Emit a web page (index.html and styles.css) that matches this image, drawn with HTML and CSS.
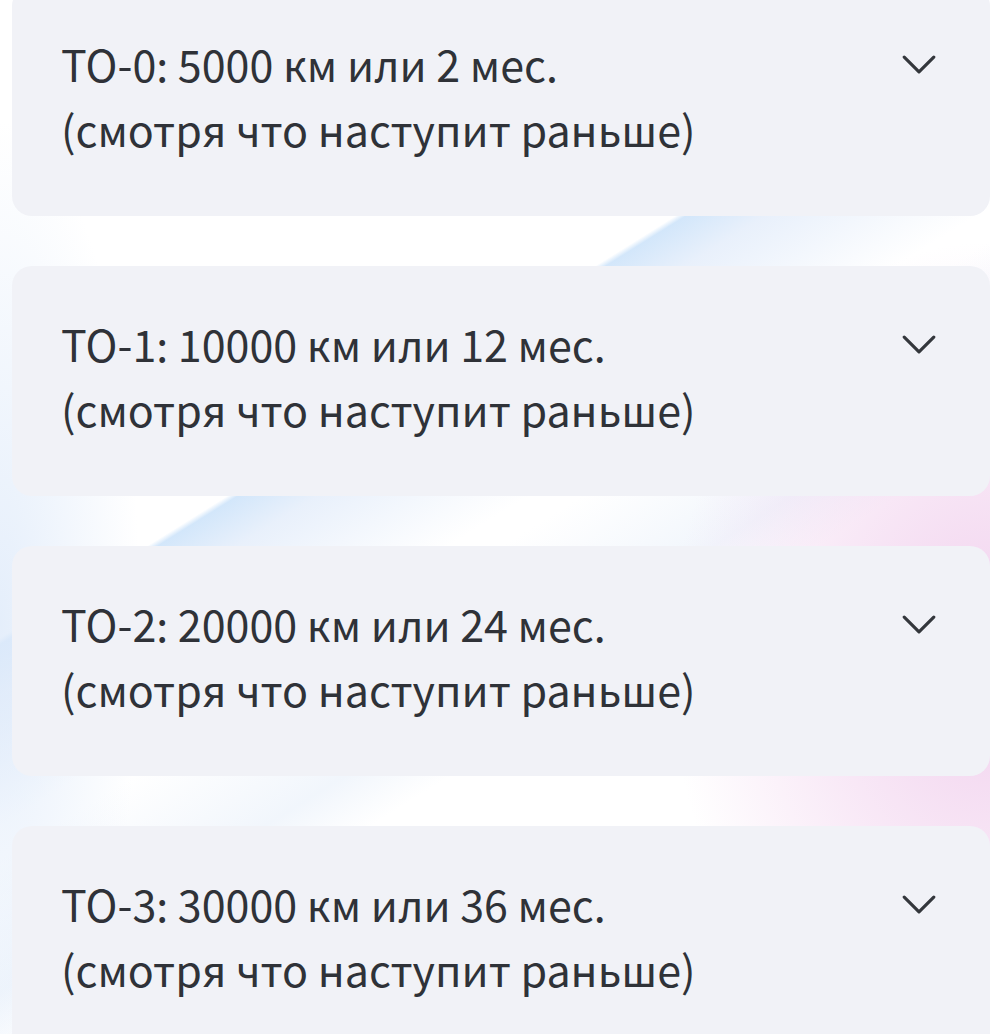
FILE: index.html
```html
<!DOCTYPE html>
<html lang="ru">
<head>
  <meta charset="UTF-8">
  <meta name="viewport" content="width=device-width, initial-scale=1.0">
  <title>Регламент ТО</title>
  <link rel="stylesheet" href="styles.css">
</head>
<body>
  <div class="service-list">
    <div class="service-item">
      <div class="service-text">
        <p>ТО-0: 5000 км или 2 мес.</p>
        <p>(смотря что наступит раньше)</p>
      </div>
      <svg class="chevron" viewBox="0 0 32 18"><polyline points="2,2 16,16 30,2"/></svg>
    </div>
    <div class="service-item">
      <div class="service-text">
        <p>ТО-1: 10000 км или 12 мес.</p>
        <p>(смотря что наступит раньше)</p>
      </div>
      <svg class="chevron" viewBox="0 0 32 18"><polyline points="2,2 16,16 30,2"/></svg>
    </div>
    <div class="service-item">
      <div class="service-text">
        <p>ТО-2: 20000 км или 24 мес.</p>
        <p>(смотря что наступит раньше)</p>
      </div>
      <svg class="chevron" viewBox="0 0 32 18"><polyline points="2,2 16,16 30,2"/></svg>
    </div>
    <div class="service-item">
      <div class="service-text">
        <p>ТО-3: 30000 км или 36 мес.</p>
        <p>(смотря что наступит раньше)</p>
      </div>
      <svg class="chevron" viewBox="0 0 32 18"><polyline points="2,2 16,16 30,2"/></svg>
    </div>
  </div>
</body>
</html>
```

FILE: styles.css
```css
/* General Styles */
html, body {
  height: 100%;
}

body {
  margin: 0;
  padding: 0;
  overflow: hidden;
  font-family: 'Noto Sans CJK SC', 'Noto Sans', sans-serif;
  color: #2d3036;
  background-color: #ffffff;
  background-image:
    radial-gradient(ellipse 320px 420px at 100% 64%, rgba(240, 205, 236, 0.95), rgba(240, 205, 236, 0) 100%),
    radial-gradient(ellipse 140px 500px at 0% 60%, rgba(222, 234, 250, 0.8), rgba(222, 234, 250, 0) 100%),
    linear-gradient(148deg, rgba(255, 255, 255, 0) 38.6%, rgba(206, 228, 250, 0.9) 39%, rgba(214, 228, 248, 0.55) 42%, rgba(255, 255, 255, 0) 50%),
    linear-gradient(148deg, rgba(255, 255, 255, 0) 52%, rgba(232, 240, 250, 0.6) 60%, rgba(255, 255, 255, 0) 64%);
}

/* Service List */
.service-list {
  display: flex;
  flex-direction: column;
  gap: 50px;
  margin-top: -14px;
  padding-left: 12px;
}

.service-item {
  box-sizing: border-box;
  height: 230px;
  display: flex;
  justify-content: space-between;
  align-items: flex-start;
  padding: 45px 54px 0 49px;
  background: #f1f2f7;
  border-radius: 20px;
}

.service-text p {
  margin: 0;
  font-size: 43px;
  line-height: 65px;
  color: #2f3238;
}

.chevron {
  width: 34px;
  height: 19px;
  margin-top: 24px;
  fill: none;
  stroke: #34373c;
  stroke-width: 3;
  stroke-linecap: round;
  stroke-linejoin: round;
}
```
